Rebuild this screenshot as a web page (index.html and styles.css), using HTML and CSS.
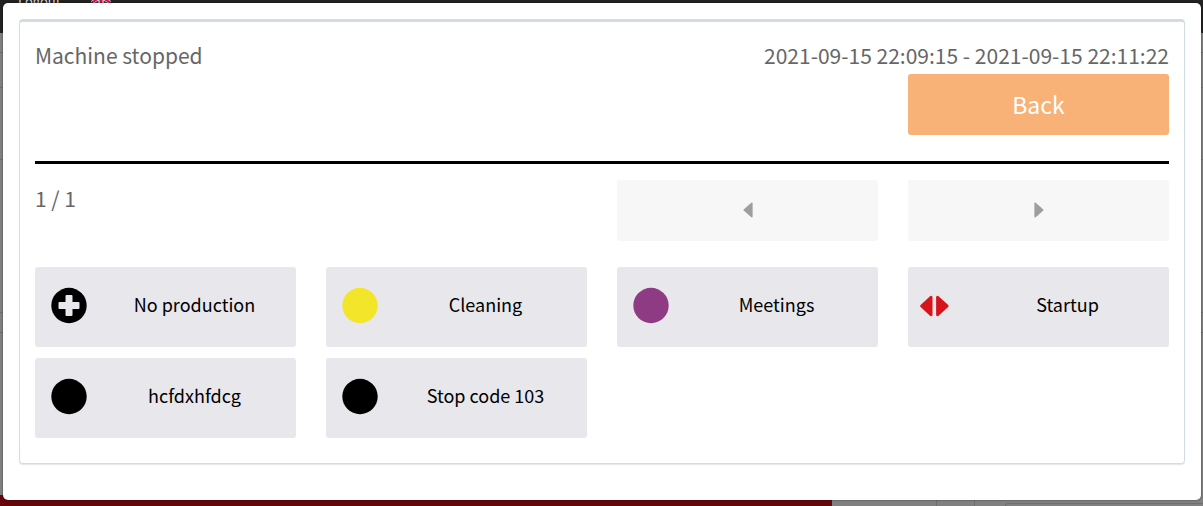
FILE: index.html
```
<!DOCTYPE html>
<html lang="en">
<head>
    <meta charset="UTF-8">
    <meta name="viewport" content="width=device-width, initial-scale=1.0">
    <title>Machine stopped</title>
    <link rel="stylesheet" href="styles.css">
</head>
<body>
    <div class="page">
        <header class="topbar">
            <a class="logout" href="#">Logout</a>
            <svg class="flag" viewBox="0 0 20 12" aria-hidden="true">
                <rect width="20" height="12" rx="3" fill="#2b3f78"/>
                <path d="M0 0L20 12M20 0L0 12" stroke="#fff" stroke-width="3"/>
                <path d="M0 0L20 12M20 0L0 12" stroke="#c8102e" stroke-width="2"/>
                <path d="M10 0V12M0 6H20" stroke="#fff" stroke-width="5"/>
                <path d="M10 0V12M0 6H20" stroke="#c8102e" stroke-width="3"/>
            </svg>
        </header>
        <main class="rows">
            <div class="row row-small"></div>
            <div class="row"></div>
            <div class="row row-tall"></div>
            <div class="row row-big"></div>
            <div class="row row-small"></div>
        </main>
        <footer class="timeline">
            <div class="stopped"></div>
            <div class="idle"></div>
            <div class="idle short"></div>
            <div class="rest"></div>
        </footer>
    </div>

    <div class="overlay">
        <div class="modal" role="dialog" aria-labelledby="modal-title">
            <div class="box">
                <div class="box-header">
                    <span id="modal-title">Machine stopped</span>
                    <span>2021-09-15 22:09:15 - 2021-09-15 22:11:22</span>
                </div>
                <div class="grid">
                    <button class="btn btn-back" type="button">Back</button>
                </div>
                <hr>
                <div class="grid pager">
                    <span class="page-count">1 / 1</span>
                    <button class="btn btn-prev" type="button" aria-label="Previous page" disabled>
                        <svg class="caret" viewBox="0 0 10 16"><path d="M9 .5Q9.600 .5 9.600 1.200V14.800Q9.600 15.500 9 15.500L8.300 15.200L.7 8.500Q.3 8 .7 7.500L8.300 .8Z"/></svg>
                    </button>
                    <button class="btn btn-next" type="button" aria-label="Next page" disabled>
                        <svg class="caret" viewBox="0 0 10 16"><path d="M1 .5Q.4 .5 .4 1.200V14.800Q.4 15.500 1 15.500L1.700 15.200L9.300 8.500Q9.700 8 9.300 7.500L1.700 .8Z"/></svg>
                    </button>
                </div>
                <div class="grid codes">
                    <button class="code" type="button">
                        <svg class="icon" viewBox="0 0 44 40">
                            <circle cx="22" cy="18.500" r="17.700"/>
                            <path d="M19.500 8H24.500Q25.500 8 25.500 9V15H31.500Q32.500 15 32.500 16V21Q32.500 22 31.500 22H25.500V28Q25.500 29 24.500 29H19.500Q18.500 29 18.500 28V22H12.500Q11.500 22 11.500 21V16Q11.500 15 12.500 15H18.500V9Q18.500 8 19.500 8Z" fill="#e8e7ec"/>
                        </svg>
                        <span>No production</span>
                    </button>
                    <button class="code" type="button">
                        <svg class="icon yellow" viewBox="0 0 44 40"><circle cx="22" cy="18.500" r="17.700"/></svg>
                        <span>Cleaning</span>
                    </button>
                    <button class="code" type="button">
                        <svg class="icon purple" viewBox="0 0 44 40"><circle cx="22" cy="18.500" r="17.700"/></svg>
                        <span>Meetings</span>
                    </button>
                    <button class="code" type="button">
                        <svg class="icon red" viewBox="0 0 44 40">
                            <path d="M10.300 9Q12.500 8.300 12.500 10.500V27.500Q12.500 29.700 10.300 29L.6 20Q-.3 19 .6 18Z"/>
                            <path d="M18.300 9Q16.100 8.300 16.100 10.500V27.500Q16.100 29.700 18.300 29L28.200 20Q29.100 19 28.200 18Z"/>
                        </svg>
                        <span>Startup</span>
                    </button>
                    <button class="code" type="button">
                        <svg class="icon" viewBox="0 0 44 40"><circle cx="22" cy="18.500" r="17.700"/></svg>
                        <span>hcfdxhfdcg</span>
                    </button>
                    <button class="code" type="button">
                        <svg class="icon" viewBox="0 0 44 40"><circle cx="22" cy="18.500" r="17.700"/></svg>
                        <span>Stop code 103</span>
                    </button>
                </div>
            </div>
        </div>
    </div>
</body>
</html>
```
FILE: styles.css
```
* {
    box-sizing: border-box;
}
body {
    margin: 0;
    font-family: "Noto Sans CJK SC", sans-serif;
    font-size: 21px;
    color: #666;
    overflow: hidden;
}
button {
    font-family: inherit;
    border: none;
    border-radius: 3px;
    cursor: pointer;
}

/* page behind the dialog */
.page {
    height: 100vh;
    display: flex;
    flex-direction: column;
    background: #808080;
}
.topbar {
    display: flex;
    gap: 30px;
    height: 48px;
    margin-top: -15px;
    padding: 6px 18px;
    background: #222;
    flex-shrink: 0;
}
.logout {
    color: #ddd;
    font-size: 13px;
    line-height: 20px;
    text-decoration: none;
}
.flag {
    width: 20px;
    height: 12px;
}
.rows {
    flex: 1;
}
.row {
    height: 35px;
    border-bottom: 1px solid #6e6e6e;
}
.row-small {
    height: 20px;
}
.row-tall {
    height: 72px;
}
.row-big {
    height: 153px;
}
.timeline {
    display: flex;
    height: 11px;
}
.stopped {
    width: 69.2%;
    background: #66060a;
}
.idle {
    width: 105px;
    border-right: 1px solid #6e6e6e;
}
.short {
    width: 38px;
}
.rest {
    flex: 1;
    margin: 8px 0 0 30px;
    border: 1px solid #6e6e6e;
    border-width: 1px 0 0 1px;
    border-radius: 4px 0 0 0;
}

/* dialog */
.overlay {
    position: absolute;
    top: 0;
    left: 0;
    right: 0;
    padding: 3px 2px 0 3px;
}
.modal {
    padding: 16px 16px 36px;
    background: #fff;
    border-radius: 5px;
    box-shadow: 0 0 2px rgba(0,0,0,0.6);
}
.box {
    padding: 15px 15px 25px;
    border: 1px solid #d2dce3;
    border-top-width: 3px;
    border-radius: 4px;
    box-shadow: 0 1px 1px rgba(0,0,0,0.1);
}
.box-header {
    display: flex;
    justify-content: space-between;
    line-height: 37px;
}
.grid {
    display: grid;
    grid-template-columns: repeat(4, 1fr);
    column-gap: 30px;
}
.btn {
    display: flex;
    align-items: center;
    justify-content: center;
    height: 61px;
    padding: 0 0 2px;
}
.btn-back {
    grid-column: 4;
    background: #f8b177;
    color: #fff;
    font-size: 23px;
}
hr {
    height: 3px;
    margin: 26px 0 16px;
    border: none;
    background: #000;
}
.page-count {
    grid-column: span 2;
    line-height: 37px;
}
.btn-prev, .btn-next {
    background: #f7f7f7;
    cursor: not-allowed;
}
.caret {
    width: 10px;
    height: 16px;
    fill: #9e9e9e;
}
.codes {
    row-gap: 11px;
    margin-top: 26px;
}
.code {
    display: flex;
    align-items: center;
    gap: 2px;
    height: 80px;
    padding: 0 0 0 12px;
    background: #e8e7ec;
    color: #000;
    font-size: 18px;
    line-height: 24px;
}
.code span {
    flex: 1;
    padding-bottom: 6px;
}
.icon {
    width: 44px;
    height: 40px;
    fill: #000;
}
.yellow {
    fill: #f3e52a;
}
.purple {
    fill: #8f3b84;
}
.red {
    fill: #d5141b;
}
```
